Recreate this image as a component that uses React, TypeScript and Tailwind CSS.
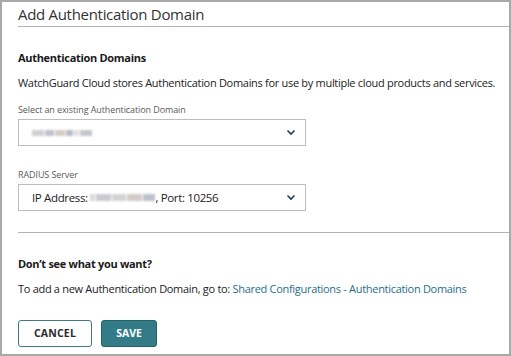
import { useState } from "react";

const Chevron = () => (
  <svg width="10" height="7" viewBox="0 0 10 7" className="text-[#1f3f55]">
    <polyline
      points="1.5,1.5 5,5 8.5,1.5"
      fill="none"
      stroke="currentColor"
      strokeWidth="1.6"
    />
  </svg>
);

// redacted value, drawn as blurred blocks
const Redacted = ({ widths }: { widths: string[] }) => (
  <span className="inline-flex items-center gap-[1px] blur-[1px] align-middle">
    {widths.map((c, i) => (
      <span key={i} className={c} />
    ))}
  </span>
);

const Select = ({ children }: { children: React.ReactNode }) => (
  <div className="w-[288px] h-[27px] border border-[#bdbdbd] flex items-center justify-between pl-[13px] pr-[9px] text-[11.5px] tracking-[-0.35px] text-[#222]">
    <div className="flex items-center">{children}</div>
    <Chevron />
  </div>
);

export default function App() {
  const [domain] = useState("");
  return (
    <div
      className="w-[511px] h-[356px] border-2 border-[#a9a9a9] bg-white pl-[16px] overflow-hidden"
      style={{ fontFamily: '"Open Sans", "Noto Sans", sans-serif' }}
    >
      <div className="border-b border-[#b4b4b4] h-[25px] flex items-end pb-[1px]">
        <h1 className="text-[15px] leading-[22px] tracking-[-0.3px] text-[#333]">
          Add Authentication Domain
        </h1>
      </div>

      <div className="pr-[16px]">
        <h2 className="mt-[23px] text-[11px] leading-[16px] tracking-[-0.3px] font-bold text-[#1a1a1a]">
          Authentication Domains
        </h2>
        <p className="mt-[9px] text-[11px] leading-[16px] text-[#222] whitespace-nowrap tracking-[-0.3px]">
          WatchGuard Cloud stores Authentication Domains for use by multiple cloud products and services.
        </p>

        <label className="block mt-[12px] text-[9px] leading-[14px] tracking-[-0.1px] text-[#5a5a5a]">
          Select an existing Authentication Domain
        </label>
        <div className="mt-[2px]">
          <Select>
            {domain || (
              <Redacted
                widths={[
                  "w-[12px] h-[6px] bg-[#cfcfcf]",
                  "w-[9px] h-[6px] bg-[#bfc2cc]",
                  "w-[10px] h-[6px] bg-[#d6cac4]",
                  "w-[7px] h-[6px] bg-[#b6bdc8]",
                  "w-[5px] h-[6px] bg-[#dedede]",
                  "w-[12px] h-[6px] bg-[#c6c7ce]",
                ]}
              />
            )}
          </Select>
        </div>

        <label className="block mt-[22px] text-[9px] leading-[14px] tracking-[-0.1px] text-[#5a5a5a]">
          RADIUS Server
        </label>
        <div className="mt-[2px]">
          <Select>
            <span>IP Address:&nbsp;</span>
            <Redacted
              widths={[
                "w-[5px] h-[7px] bg-[#dadada]",
                "w-[15px] h-[7px] bg-[#c8cad2]",
                "w-[14px] h-[7px] bg-[#d3d3d3]",
                "w-[15px] h-[7px] bg-[#d4cbc7]",
                "w-[12px] h-[7px] bg-[#bcc2cc]",
              ]}
            />
            <span>, Port: 10256</span>
          </Select>
        </div>
      </div>

      <div className="mt-[21px] border-t border-[#b4b4b4]" />

      <div className="pr-[16px]">
        <h3 className="mt-[23px] text-[11px] leading-[16px] tracking-[-0.3px] font-bold text-[#1a1a1a]">
          Don’t see what you want?
        </h3>
        <p className="mt-[9px] text-[11px] leading-[16px] tracking-[-0.3px] text-[#222] whitespace-nowrap">
          To add a new Authentication Domain, go to:{" "}
          <a className="text-[#26708a]">Shared Configurations - Authentication Domains</a>
        </p>

        <div className="mt-[23px] flex gap-[9px]">
          <button className="w-[74px] h-[27px] rounded-[3px] border border-[#3d7a85] bg-white text-[10.5px] font-bold tracking-[0.2px] text-[#2a2a2a]">
            CANCEL
          </button>
          <button className="w-[56px] h-[27px] rounded-[3px] border border-[#24626c] bg-[#337b86] text-[10.5px] font-bold text-white">
            SAVE
          </button>
        </div>
      </div>
    </div>
  );
}
